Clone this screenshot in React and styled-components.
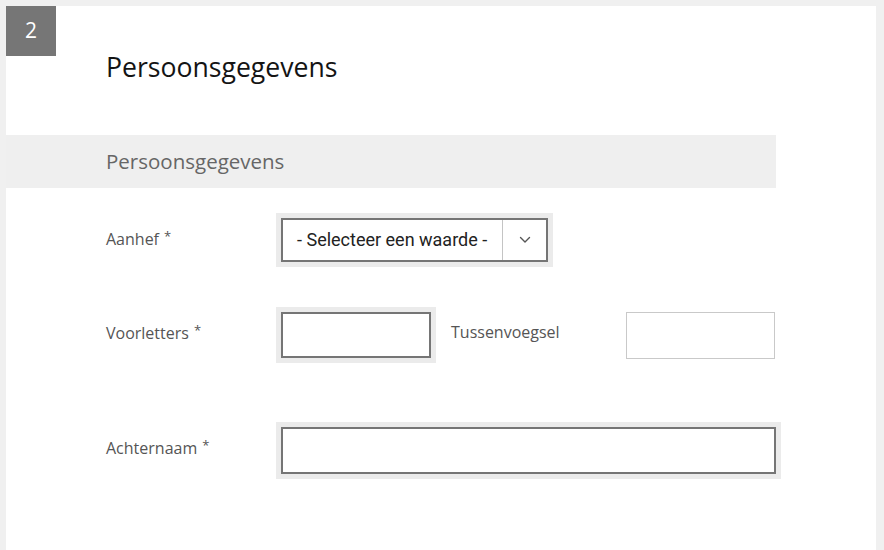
import React from "react";
import styled, { createGlobalStyle } from "styled-components";

const Global = createGlobalStyle`
  html, body { margin: 0; padding: 0; background: #f0f0f0; }
  body { font-family: "Open Sans", "Noto Sans", sans-serif; }
  * { box-sizing: border-box; }
`;

const Card = styled.div`
  margin: 6px 8px 0 6px;
  background: #ffffff;
  min-height: calc(100vh - 6px);
  padding-bottom: 40px;
`;

const Header = styled.div`
  display: flex;
  align-items: flex-start;
`;

const StepBadge = styled.div`
  width: 50px;
  height: 50px;
  flex: none;
  background: #767676;
  color: #ffffff;
  display: flex;
  align-items: center;
  justify-content: center;
  font-family: "Open Sans", sans-serif;
  font-size: 21px;
  line-height: 1;
  padding-bottom: 2px;
`;

const Title = styled.h1`
  margin: 43px 0 0 50px;
  font-family: "Open Sans", sans-serif;
  font-weight: 400;
  font-size: 26.6px;
  line-height: 37px;
  color: #141414;
`;

const SectionBar = styled.div`
  margin-top: 49px;
  width: 770px;
  height: 53px;
  background: #efefef;
  display: flex;
  align-items: center;
  padding-left: 100px;
  padding-bottom: 2px;
  font-family: "Open Sans", sans-serif;
  font-size: 20.5px;
  color: #666666;
`;

const Form = styled.div`
  padding-left: 100px;
  display: flex;
  flex-direction: column;
`;

const Row = styled.div`
  display: grid;
  grid-template-columns: 170px auto;
  align-items: center;
  margin-top: ${(p) => p.$gap}px;
`;

const Label = styled.label`
  font-family: "Open Sans", sans-serif;
  font-size: 16px;
  color: #555555;
  padding-bottom: ${(p) => (p.$lift ? p.$lift : 3)}px;
  white-space: nowrap;
`;

const Star = styled.span`
  font-size: 13px;
  vertical-align: 4px;
  margin-left: 5px;
`;

const FieldLine = styled.div`
  display: flex;
  align-items: center;
`;

const Frame = styled.div`
  padding: 5px;
  background: ${(p) => (p.$required ? "#ebebeb" : "transparent")};
  display: inline-flex;
`;

const TextBox = styled.div`
  width: ${(p) => p.$w}px;
  height: ${(p) => p.$h || 46}px;
  background: #ffffff;
  border: ${(p) => (p.$light ? "1px solid #c9c9c9" : "2px solid #757575")};
`;

const Select = styled.div`
  width: 267px;
  height: 44px;
  border: 2px solid #757575;
  background: #ffffff;
  display: flex;
  align-items: stretch;
`;

const SelectValue = styled.div`
  flex: 1;
  display: flex;
  align-items: center;
  padding-left: 14px;
  padding-bottom: 1px;
  font-family: Roboto, "Liberation Sans", sans-serif;
  font-size: 18px;
  color: #222222;
  white-space: nowrap;
`;

const SelectToggle = styled.div`
  width: 44px;
  border-left: 1px solid #c4c4c4;
  display: flex;
  align-items: center;
  justify-content: center;
`;

const InlineLabel = styled(Label)`
  width: 190px;
  padding-left: 15px;
`;

const Chevron = () => (
  <svg width="12" height="8" viewBox="0 0 12 8" fill="none">
    <path d="M1.5 1.5 L6 6 L10.5 1.5" stroke="#555" strokeWidth="1.4" strokeLinecap="round" strokeLinejoin="round" />
  </svg>
);

export default function App() {
  return (
    <>
      <Global />
      <Card>
        <Header>
          <StepBadge>2</StepBadge>
          <Title>Persoonsgegevens</Title>
        </Header>
        <SectionBar>Persoonsgegevens</SectionBar>
        <Form>
          <Row $gap={25}>
            <Label>
              Aanhef<Star>*</Star>
            </Label>
            <FieldLine>
              <Frame $required>
                <Select>
                  <SelectValue>- Selecteer een waarde -</SelectValue>
                  <SelectToggle>
                    <Chevron />
                  </SelectToggle>
                </Select>
              </Frame>
            </FieldLine>
          </Row>
          <Row $gap={40}>
            <Label $lift={6}>
              Voorletters<Star>*</Star>
            </Label>
            <FieldLine>
              <Frame $required>
                <TextBox $w={150} />
              </Frame>
              <InlineLabel $lift={6}>Tussenvoegsel</InlineLabel>
              <TextBox $w={149} $h={47} $light />
            </FieldLine>
          </Row>
          <Row $gap={59}>
            <Label $lift={6}>
              Achternaam<Star>*</Star>
            </Label>
            <FieldLine>
              <Frame $required>
                <TextBox $w={495} $h={47} />
              </Frame>
            </FieldLine>
          </Row>
        </Form>
      </Card>
    </>
  );
}
